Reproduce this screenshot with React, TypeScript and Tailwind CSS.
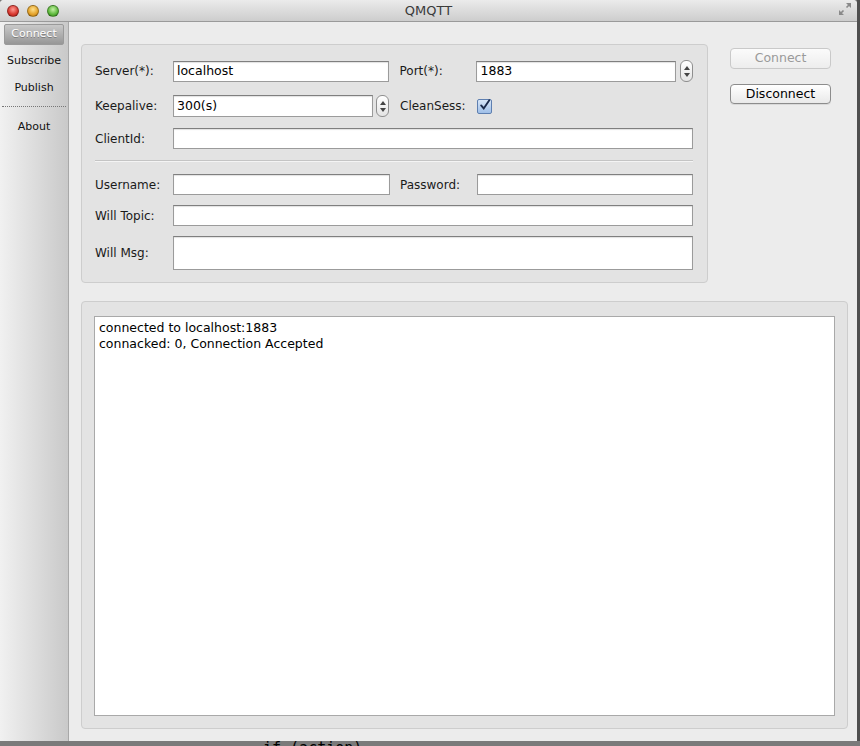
import React from "react";

const FONT = "font-['DejaVu_Sans',sans-serif]";

function TrafficLight({ color }: { color: string }) {
  return <span className={`block h-[12px] w-[12px] rounded-full border border-black/30 ${color}`} />;
}

function TextBox({ value = "", className = "" }: { value?: string; className?: string }) {
  return (
    <div
      className={`flex h-[21px] items-center border border-[#9b9b9b] border-t-[#7f7f7f] bg-white px-[3px] text-[12.5px] text-black shadow-[inset_0_1px_1px_rgba(0,0,0,0.12)] ${className}`}
    >
      {value}
    </div>
  );
}

function Spinner() {
  return (
    <div className="flex h-[22px] w-[13px] flex-col items-center justify-center gap-[3px] rounded-[6px] border border-[#8f8f8f] bg-gradient-to-b from-white to-[#e4e4e4]">
      <svg width="6" height="4" viewBox="0 0 6 4">
        <path d="M3 0 L6 4 L0 4 Z" fill="#444" />
      </svg>
      <svg width="6" height="4" viewBox="0 0 6 4">
        <path d="M0 0 L6 0 L3 4 Z" fill="#444" />
      </svg>
    </div>
  );
}

function Label({ children, className = "w-[78px]" }: { children: React.ReactNode; className?: string }) {
  return <div className={`shrink-0 text-[12px] text-[#1a1a1a] ${className}`}>{children}</div>;
}

function CheckBox() {
  return (
    <div className="flex h-[15px] w-[15px] items-center justify-center rounded-[2px] border border-[#5e7fb0] bg-gradient-to-b from-[#d8e6f7] to-[#9fbfe8]">
      <svg width="14" height="14" viewBox="0 0 14 14" className="-mt-[2px] ml-[1px]">
        <path d="M2.5 7.5 L5.5 11 L12 1.5" fill="none" stroke="#1b2a4a" strokeWidth="2.2" strokeLinecap="round" />
      </svg>
    </div>
  );
}

function SideItem({ label }: { label: string }) {
  return <div className="flex h-[27px] items-center justify-center text-[11px] text-[#111]">{label}</div>;
}

export default function App() {
  return (
    <div className={`flex h-[746px] w-[860px] flex-col overflow-hidden bg-[#777] ${FONT}`}>
      <div className="flex h-[741px] shrink-0">
        <div className="flex w-[857px] flex-col overflow-hidden rounded-t-[4px] bg-[#ececec]">
          {/* title bar */}
          <div className="flex h-[22px] shrink-0 items-center border-b border-[#9a9a9a] bg-gradient-to-b from-[#ebebeb] to-[#cdcdcd]">
            <div className="flex w-[80px] gap-[8px] pl-[7px]">
              <TrafficLight color="bg-[radial-gradient(circle_at_50%_35%,#ff9a92,#d7372f_60%,#a71c16)]" />
              <TrafficLight color="bg-[radial-gradient(circle_at_50%_35%,#ffe08a,#e3a22a_60%,#b0720c)]" />
              <TrafficLight color="bg-[radial-gradient(circle_at_50%_35%,#c4f0a5,#5cb83b_60%,#2f7e17)]" />
            </div>
            <div className="flex-1 text-center text-[13px] text-[#3a3a3a]">QMQTT</div>
            <div className="flex w-[80px] justify-end">
              <svg width="14" height="14" viewBox="0 0 14 14" className="mr-[5px] -mt-[4px]">
                <path d="M8 1 H13 V6 Z M6 13 H1 V8 Z" fill="#8a8a8a" />
                <path d="M12 2 L8.5 5.5 M2 12 L5.5 8.5" stroke="#8a8a8a" strokeWidth="1.6" />
              </svg>
            </div>
          </div>

          <div className="flex flex-1">
            {/* sidebar */}
            <div className="flex w-[69px] shrink-0 flex-col border-r border-[#a8a8a8] bg-gradient-to-r from-[#f1f1f1] to-[#c9c9c9] px-[2px] pt-[2px]">
              <div className="mx-[2px] flex h-[21px] items-center justify-center rounded-[2px] border border-[#9a9a9a] bg-gradient-to-b from-[#c9c9c9] to-[#979797] text-[11px] text-white [text-shadow:0_1px_0_rgba(0,0,0,0.3)]">
                Connect
              </div>
              <div className="h-[3px]" />
              <SideItem label="Subscribe" />
              <SideItem label="Publish" />
              <div className="mt-[4px] border-t border-dotted border-[#777]" />
              <div className="h-[7px]" />
              <SideItem label="About" />
            </div>

            {/* main */}
            <div className="flex flex-1 flex-col pl-[12px] pr-[10px] pt-[22px]">
              <div className="flex">
                <div className="flex h-[239px] w-[627px] flex-col rounded-[4px] border border-[#cdcdcd] bg-[#e3e3e3] pl-[13px] pr-[14px] pt-[15px]">
                  <div className="flex items-center">
                    <Label>Server(*):</Label>
                    <TextBox value="localhost" className="w-[217px]" />
                    <Label className="ml-[10px] w-[77px]">Port(*):</Label>
                    <TextBox value="1883" className="w-[200px]" />
                    <div className="ml-[4px]">
                      <Spinner />
                    </div>
                  </div>
                  <div className="mt-[13px] flex items-center">
                    <Label>Keepalive:</Label>
                    <TextBox value="300(s)" className="h-[22px] w-[200px]" />
                    <div className="ml-[3px]">
                      <Spinner />
                    </div>
                    <Label className="ml-[11px] w-[77px]">CleanSess:</Label>
                    <CheckBox />
                  </div>
                  <div className="mt-[11px] flex items-center">
                    <Label>ClientId:</Label>
                    <TextBox className="flex-1" />
                  </div>
                  <div className="mt-[11px] border-t border-[#c4c4c4] border-b border-b-[#f4f4f4]" />
                  <div className="mt-[12px] flex items-center">
                    <Label>Username:</Label>
                    <TextBox className="w-[217px]" />
                    <Label className="ml-[10px] w-[77px]">Password:</Label>
                    <TextBox className="flex-1" />
                  </div>
                  <div className="mt-[10px] flex items-center">
                    <Label>Will Topic:</Label>
                    <TextBox className="flex-1" />
                  </div>
                  <div className="mt-[10px] flex items-center">
                    <Label>Will Msg:</Label>
                    <TextBox className="h-[34px] flex-1" />
                  </div>
                </div>

                <div className="ml-[22px] flex w-[101px] flex-col gap-[15px] pt-[4px]">
                  <div className="flex h-[21px] items-center justify-center rounded-[4px] border border-[#c9c9c9] bg-gradient-to-b from-[#fbfbfb] to-[#ededed] text-[12.5px] text-[#9a9a9a]">
                    Connect
                  </div>
                  <div className="flex h-[20px] items-center justify-center rounded-[4px] border border-[#8c8c8c] bg-gradient-to-b from-white to-[#e9e9e9] text-[12.5px] text-black shadow-[0_1px_0_rgba(0,0,0,0.08)]">
                    Disconnect
                  </div>
                </div>
              </div>

              <div className="mt-[18px] flex h-[428px] w-[767px] flex-col rounded-[4px] border border-[#cdcdcd] bg-[#e3e3e3] px-[12px] pb-[12px] pt-[14px]">
                <div className="flex-1 border border-[#a9a9a9] bg-white px-[4px] pt-[3px] text-[12.5px] leading-[16px] text-black">
                  <div>connected to localhost:1883</div>
                  <div>connacked: 0, Connection Accepted</div>
                </div>
              </div>
            </div>
          </div>
        </div>
        <div className="w-[3px] bg-[#4f4f4f]" />
      </div>
      <div className="h-[5px] overflow-hidden bg-[#7a7a7a]">
        <div className="pl-[263px] font-['DejaVu_Sans_Mono',monospace] text-[15px] leading-[15px] text-black">
          if (action)
        </div>
      </div>
    </div>
  );
}
